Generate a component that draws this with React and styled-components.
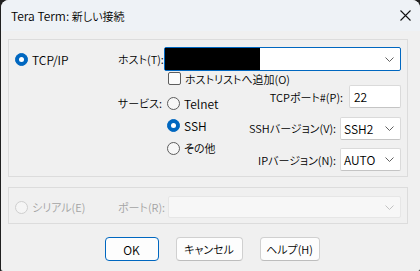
import React from 'react'
import styled, { createGlobalStyle } from 'styled-components'

const GlobalStyle = createGlobalStyle`
  html, body {
    margin: 0;
    padding: 0;
    background: #202020;
  }
  body {
    font-family: "Noto Sans CJK JP", "Noto Sans", sans-serif;
    font-size: 12px;
    font-weight: 350;
    font-feature-settings: "palt";
    color: #000;
  }
`

const Window = styled.div`
  margin-left: 1px;
  width: 419px;
  height: 271px;
  background: #f0f0f0;
  border-radius: 8px 8px 2px 2px;
  overflow: hidden;
  display: flex;
  flex-direction: column;
`

const TitleBar = styled.div`
  height: 31px;
  flex: none;
  display: flex;
  align-items: center;
  justify-content: space-between;
  padding: 0 9px 0 10px;
  background: #eef2f6;
`

const Title = styled.span`
  font-size: 12px;
  line-height: 1;
`

const Body = styled.div`
  padding: 8px 12px 0 7px;
  display: flex;
  flex-direction: column;
`

const GroupBox = styled.div`
  border: 1px solid #dcdcdc;
  padding: ${(p) => p.$pad};
  margin-top: ${(p) => p.$top || 0}px;
  display: flex;
  flex-direction: column;
`

const Row = styled.div`
  display: flex;
  align-items: center;
  height: ${(p) => p.$h}px;
  margin-top: ${(p) => p.$top || 0}px;
  padding-left: ${(p) => p.$indent || 0}px;
`

const Cell = styled.div`
  width: ${(p) => p.$w}px;
  flex: none;
  display: flex;
  align-items: center;
`

const Jp = styled.span`
  font-size: 11px;
`

const FieldLabel = styled.span`
  width: ${(p) => p.$w}px;
  flex: none;
  text-align: right;
  padding-right: ${(p) => p.$pr || 2}px;
  box-sizing: border-box;
  font-size: 11px;
  color: ${(p) => (p.$disabled ? '#a3a3a3' : '#000')};
  white-space: nowrap;
  height: ${(p) => p.$h || 'auto'};
  line-height: ${(p) => p.$h || 'normal'};
`

const Choice = styled.label`
  display: flex;
  align-items: center;
  gap: 4px;
  height: ${(p) => p.$h || 'auto'};
  color: ${(p) => (p.$disabled ? '#a3a3a3' : '#000')};
  white-space: nowrap;
`

const RadioDot = styled.span`
  width: 13px;
  height: 13px;
  box-sizing: border-box;
  border-radius: 50%;
  flex: none;
  position: relative;
  background: ${(p) => (p.$checked ? '#0067c0' : p.$disabled ? '#f5f5f5' : '#f7f7f7')};
  border: 1px solid ${(p) => (p.$checked ? '#0067c0' : p.$disabled ? '#cfcfcf' : '#5d5d5d')};

  &::after {
    content: '';
    display: ${(p) => (p.$checked ? 'block' : 'none')};
    position: absolute;
    left: 3px;
    top: 3px;
    width: 5px;
    height: 5px;
    border-radius: 50%;
    background: #fff;
  }
`

const CheckBox = styled.span`
  width: 13px;
  height: 13px;
  box-sizing: border-box;
  border: 1px solid #5d5d5d;
  border-radius: 2px;
  background: #fbfbfb;
  flex: none;
`

const Combo = styled.div`
  height: ${(p) => p.$h}px;
  width: ${(p) => (p.$w ? `${p.$w}px` : 'auto')};
  flex: ${(p) => (p.$w ? 'none' : '1')};
  box-sizing: border-box;
  display: flex;
  align-items: center;
  justify-content: space-between;
  padding: 0 6px 0 ${(p) => p.$pl || 3}px;
  background: ${(p) => (p.$disabled ? '#f7f7f7' : '#fff')};
  border: 1px solid ${(p) => (p.$focus ? '#0067c0' : p.$disabled ? '#e6e6e6' : '#dadada')};
  border-bottom-color: ${(p) => (p.$focus ? '#0067c0' : p.$disabled ? '#e6e6e6' : '#c4c4c4')};
  border-radius: 2px;
`

const Redacted = styled.span`
  align-self: stretch;
  width: 95px;
  margin-left: -3px;
  background: #000;
`

const LowerArea = styled.div`
  display: flex;
  align-items: flex-start;
`

const ServiceBlock = styled.div`
  display: flex;
  padding-top: 7px;
`

const RadioList = styled.div`
  display: flex;
  flex-direction: column;
  padding-left: 3px;
`

const PortBlock = styled.div`
  margin-left: auto;
  display: flex;
  flex-direction: column;
  align-items: flex-end;
  gap: 8.5px;
`

const PortRow = styled.div`
  display: flex;
  align-items: center;
  gap: ${(p) => p.$gap}px;
  font-size: 11px;
`

const ButtonRow = styled.div`
  display: flex;
  justify-content: center;
  gap: 17px;
  margin-top: 13px;
  padding-left: 8px;
`

const Button = styled.button`
  height: 24px;
  width: ${(p) => p.$w}px;
  box-sizing: border-box;
  font: inherit;
  font-size: ${(p) => (p.$jp ? 11 : 12)}px;
  color: #000;
  background: #fdfdfd;
  border: 1px solid ${(p) => (p.$primary ? '#0067c0' : '#d0d0d0')};
  border-bottom-color: ${(p) => (p.$primary ? '#0067c0' : '#bdbdbd')};
  border-radius: 4px;
  padding: 0;
`

const Value = styled.span`
  font-size: 12px;
`

const Chevron = ({ color = '#606060' }) => (
  <svg width="9" height="5" viewBox="0 0 9 5">
    <path d="M0.5 0.5 L4.5 4.5 L8.5 0.5" fill="none" stroke={color} strokeWidth="1" />
  </svg>
)

const CloseIcon = () => (
  <svg width="11" height="11" viewBox="0 0 11 11">
    <path d="M0.5 0.5 L10.5 10.5 M10.5 0.5 L0.5 10.5" stroke="#111" strokeWidth="1.1" />
  </svg>
)

const Radio = ({ checked, disabled, children, h }) => (
  <Choice $disabled={disabled} $h={h}>
    <RadioDot $checked={checked} $disabled={disabled} />
    {children}
  </Choice>
)

export default function App() {
  return (
    <>
      <GlobalStyle />
      <Window>
        <TitleBar>
          <Title>
            Tera Term: <Jp>新しい接続</Jp>
          </Title>
          <CloseIcon />
        </TitleBar>
        <Body>
          <GroupBox $pad="7px 6px 5px 6px">
            <Row $h={24}>
              <Cell $w={103}>
                <Radio checked>TCP/IP</Radio>
              </Cell>
              <FieldLabel $w={46}>ホスト(T):</FieldLabel>
              <Combo $h={24} $focus>
                <Redacted />
                <Chevron />
              </Combo>
            </Row>
            <Row $h={13} $top={1} $indent={153}>
              <Choice>
                <CheckBox />
                <Jp>ホストリストへ追加(O)</Jp>
              </Choice>
            </Row>
            <LowerArea>
              <ServiceBlock>
                <FieldLabel $w={149} $h="22.5px">サービス:</FieldLabel>
                <RadioList>
                  <Radio h="22.5px">Telnet</Radio>
                  <Radio h="22.5px" checked>SSH</Radio>
                  <Radio h="22.5px"><Jp>その他</Jp></Radio>
                </RadioList>
              </ServiceBlock>
              <PortBlock>
                <PortRow $gap={6}>
                  <span>TCPポート#(P):</span>
                  <Combo $h={23} $w={52} $pl={4}><Value>22</Value></Combo>
                </PortRow>
                <PortRow $gap={4}>
                  <span>SSHバージョン(V):</span>
                  <Combo $h={23} $w={61}>
                    <Value>SSH2</Value>
                    <Chevron />
                  </Combo>
                </PortRow>
                <PortRow $gap={4}>
                  <span>IPバージョン(N):</span>
                  <Combo $h={23} $w={61}>
                    <Value>AUTO</Value>
                    <Chevron />
                  </Combo>
                </PortRow>
              </PortBlock>
            </LowerArea>
          </GroupBox>
          <GroupBox $pad="8px 6px 5px 6px" $top={10}>
            <Row $h={22}>
              <Cell $w={103}>
                <Radio disabled><Jp>シリアル(E)</Jp></Radio>
              </Cell>
              <FieldLabel $w={50} $pr={5} $disabled>
                ポート(R):
              </FieldLabel>
              <Combo $h={22} $disabled>
                <span />
                <Chevron color="#c2c2c2" />
              </Combo>
            </Row>
          </GroupBox>
          <ButtonRow>
            <Button $primary $w={54}>OK</Button>
            <Button $jp $w={67}>キャンセル</Button>
            <Button $jp $w={60}>ヘルプ(H)</Button>
          </ButtonRow>
        </Body>
      </Window>
    </>
  )
}
